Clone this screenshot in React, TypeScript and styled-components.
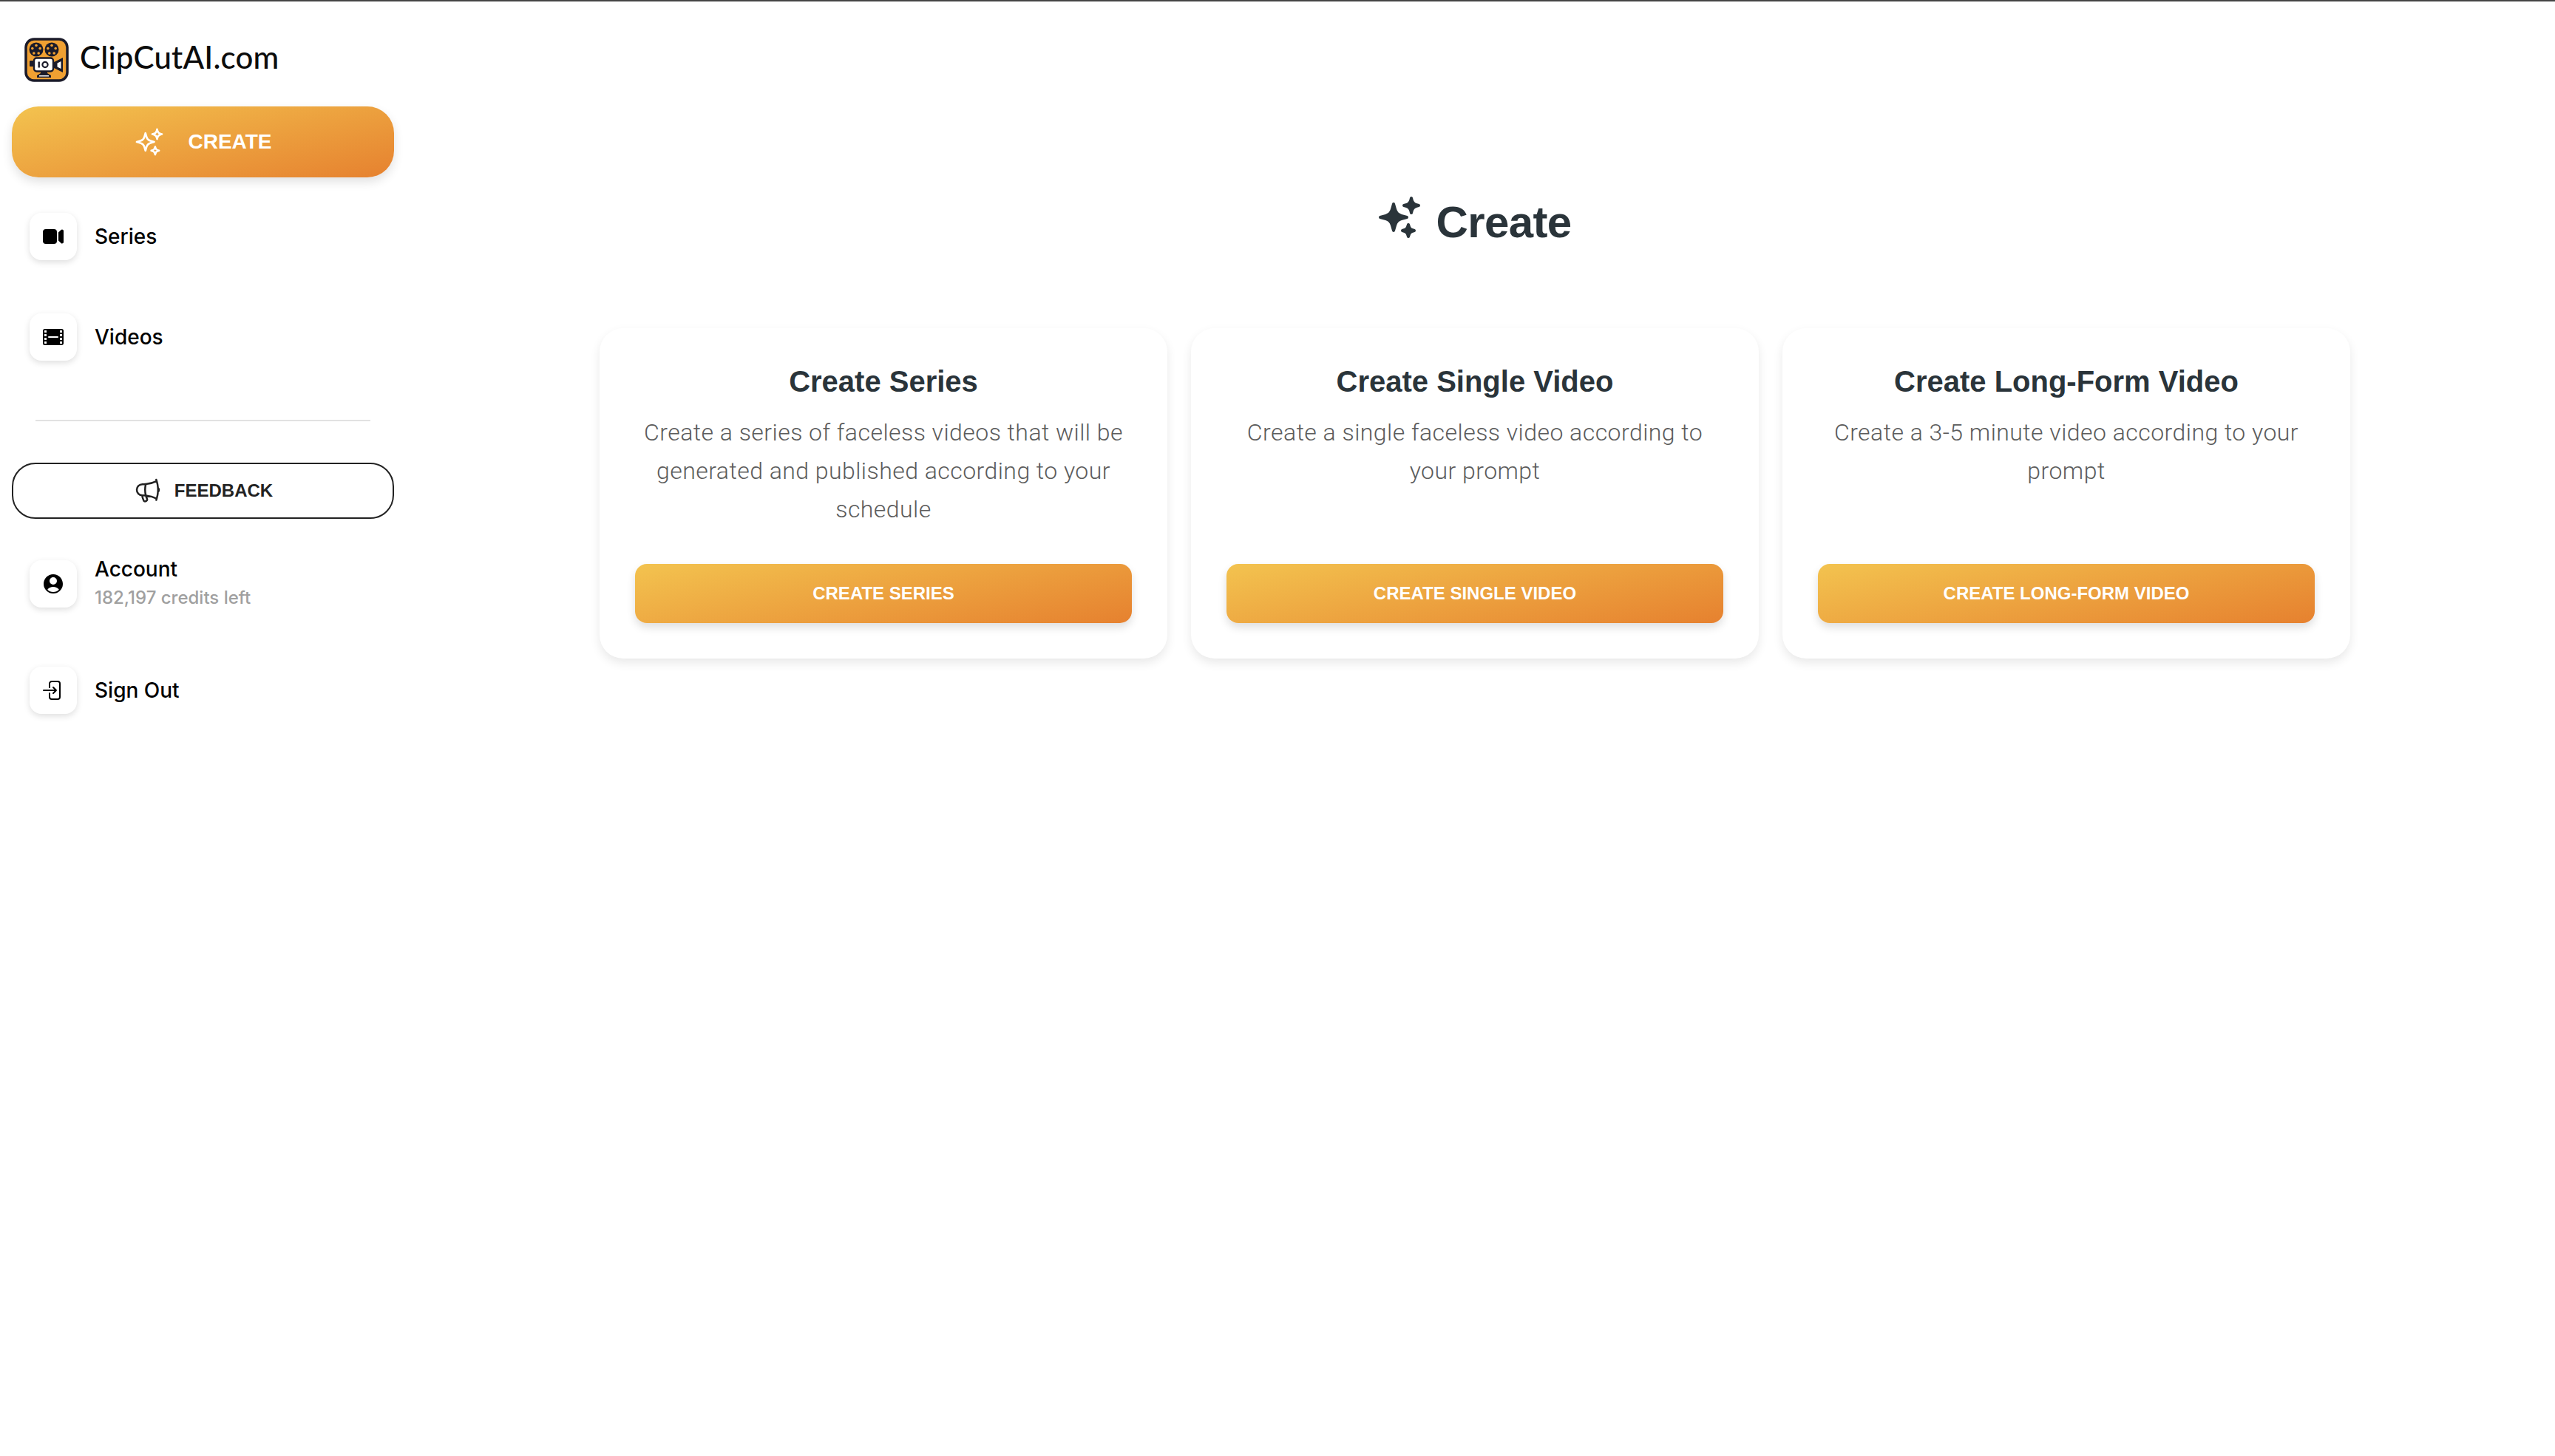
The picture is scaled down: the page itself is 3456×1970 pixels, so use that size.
import { ReactNode } from "react";
import styled, { createGlobalStyle } from "styled-components";
import {
  HiVideoCamera,
  HiFilm,
  HiSparkles,
  HiOutlineSparkles,
  HiOutlineMegaphone,
  HiUserCircle,
  HiOutlineArrowRightEndOnRectangle,
} from "react-icons/hi2";

const brandGradient = "linear-gradient(168deg, #f3c34f 0%, #e6812f 100%)";
const helvetica = '"Liberation Sans", Arial, sans-serif';

const GlobalStyle = createGlobalStyle`
  html, body {
    margin: 0;
    padding: 0;
    background: #fff;
  }
  * {
    box-sizing: border-box;
  }
`;

const Page = styled.div`
  display: flex;
  width: 3456px;
  height: 1970px;
  overflow: hidden;
  border-top: 2px solid #444;
  background: #fff;
`;

const Sidebar = styled.aside`
  width: 534px;
  flex-shrink: 0;
  display: flex;
  flex-direction: column;
  padding: 49px 1px 0 16px;
`;

const Brand = styled.div`
  display: flex;
  align-items: center;
  gap: 15px;
  height: 60px;
  padding-left: 17px;
`;

const BrandName = styled.span`
  padding-bottom: 8px;
  font-family: Lato, sans-serif;
  font-size: 42px;
  font-weight: 500;
  letter-spacing: 0.2px;
  color: #0c0c0c;
`;

const CreateButton = styled.button`
  display: flex;
  align-items: center;
  justify-content: center;
  gap: 31px;
  height: 96px;
  margin-top: 33px;
  border: 0;
  border-radius: 36px;
  background: ${brandGradient};
  box-shadow: 0 6px 14px rgba(0, 0, 0, 0.12);
  color: #fff;
  font-family: ${helvetica};
  font-size: 28px;
  font-weight: 700;
`;

const NavList = styled.nav<{ $gap: number; $top: number }>`
  display: flex;
  flex-direction: column;
  gap: ${(p) => p.$gap}px;
  margin-top: ${(p) => p.$top}px;
`;

const NavRow = styled.div`
  display: flex;
  align-items: center;
  gap: 24px;
  height: 64px;
  padding-left: 24px;
`;

const IconBox = styled.span`
  display: flex;
  align-items: center;
  justify-content: center;
  width: 64px;
  height: 64px;
  border-radius: 16px;
  background: #fff;
  box-shadow: 0 3px 8px rgba(0, 0, 0, 0.13);
  color: #000;
`;

const NavText = styled.div`
  display: flex;
  flex-direction: column;
  gap: 7px;
`;

const NavLabel = styled.span`
  font-family: Inter, sans-serif;
  font-size: 28px;
  line-height: 34px;
  font-weight: 500;
  color: #000;
`;

const NavHint = styled.span`
  margin-bottom: 4px;
  font-family: Inter, sans-serif;
  font-size: 24px;
  line-height: 30px;
  font-weight: 500;
  color: #a0a0a0;
`;

const Divider = styled.hr`
  width: 453px;
  height: 2px;
  margin: 80px 0 56px 32px;
  border: 0;
  background: #e2e2e2;
`;

const FeedbackButton = styled.button`
  display: flex;
  align-items: center;
  justify-content: center;
  gap: 16px;
  height: 76px;
  border: 2px solid #222;
  border-radius: 32px;
  background: #fff;
  color: #222;
  font-family: ${helvetica};
  font-size: 24px;
  font-weight: 700;
`;

const Main = styled.main`
  flex: 1;
  display: flex;
  flex-direction: column;
  align-items: center;
  padding-top: 258px;
`;

const Heading = styled.h1`
  display: flex;
  align-items: center;
  gap: 17px;
  height: 80px;
  margin: 0;
  color: #2a343a;
  font-family: ${helvetica};
  font-size: 60px;
  font-weight: 700;
  letter-spacing: -0.6px;
`;

const HeadingIcon = styled(HiSparkles)`
  width: 64px;
  height: 64px;
  margin-top: -12px;
  margin-left: -3px;
`;

const CardGrid = styled.section`
  display: grid;
  grid-template-columns: repeat(3, 768px);
  gap: 32px;
  margin-top: 104px;
`;

const Card = styled.article`
  display: flex;
  flex-direction: column;
  padding: 48px;
  border-radius: 32px;
  background: #fff;
  box-shadow: 0 6px 14px rgba(0, 0, 0, 0.09);
  text-align: center;
`;

const CardTitle = styled.h2`
  margin: 0 0 19px;
  color: #2a343a;
  font-family: ${helvetica};
  font-size: 40px;
  line-height: 48px;
  font-weight: 700;
`;

const CardText = styled.p`
  min-height: 156px;
  margin: 0 0 48px;
  color: #5c5c5c;
  font-family: Roboto, sans-serif;
  font-size: 32px;
  line-height: 52px;
  font-weight: 300;
  letter-spacing: 0.45px;
`;

const CardButton = styled.button`
  height: 80px;
  margin-top: auto;
  border: 0;
  border-radius: 16px;
  background: ${brandGradient};
  box-shadow: 0 6px 12px rgba(0, 0, 0, 0.13);
  color: #fff;
  font-family: ${helvetica};
  font-size: 24px;
  font-weight: 700;
`;

const cards = [
  {
    title: "Create Series",
    text: "Create a series of faceless videos that will be generated and published according to your schedule",
    action: "CREATE SERIES",
  },
  {
    title: "Create Single Video",
    text: "Create a single faceless video according to your prompt",
    action: "CREATE SINGLE VIDEO",
  },
  {
    title: "Create Long-Form Video",
    text: "Create a 3-5 minute video according to your prompt",
    action: "CREATE LONG-FORM VIDEO",
  },
];

const Logo = () => (
  <svg width="60" height="60" viewBox="0 0 60 60">
    <rect x="2" y="2" width="56" height="56" rx="11" fill="#f0a032" stroke="#1b1b2a" strokeWidth="3.5" />
    <g fill="#1b1b2a">
      <circle cx="16" cy="16" r="9.5" />
      <circle cx="37" cy="16" r="9.5" />
      <rect x="7" y="31" width="7" height="8" rx="1" />
      <path d="M40 33l12-6v20l-12-6z" />
      <path d="M22 44h9v4l5 3v3H17v-3l5-3z" />
    </g>
    <g fill="#f0a032">
      <circle cx="16" cy="10.5" r="1.8" />
      <circle cx="10.8" cy="14.5" r="1.8" />
      <circle cx="21.2" cy="14.5" r="1.8" />
      <circle cx="12.8" cy="21" r="1.8" />
      <circle cx="19.2" cy="21" r="1.8" />
      <circle cx="37" cy="10.5" r="1.8" />
      <circle cx="31.8" cy="14.5" r="1.8" />
      <circle cx="42.2" cy="14.5" r="1.8" />
      <circle cx="33.8" cy="21" r="1.8" />
      <circle cx="40.2" cy="21" r="1.8" />
    </g>
    <rect x="13" y="27.5" width="26" height="18" rx="3.5" fill="#fff" stroke="#1b1b2a" strokeWidth="2.4" />
    <rect x="18.5" y="32.5" width="2.4" height="8" fill="#1b1b2a" />
    <circle cx="28" cy="36.5" r="3.6" fill="none" stroke="#1b1b2a" strokeWidth="2.2" />
    <path d="M44.5 34.5l5-2.6v10.200l-5-2.600z" fill="#fff" />
    <path d="M20 51h13v1.500H20z" fill="#fff" />
  </svg>
);

const SideItem = ({ icon, label, hint }: { icon: ReactNode; label: string; hint?: string }) => (
  <NavRow>
    <IconBox>{icon}</IconBox>
    <NavText>
      <NavLabel>{label}</NavLabel>
      {hint && <NavHint>{hint}</NavHint>}
    </NavText>
  </NavRow>
);

const App = () => {
  return (
    <Page>
      <GlobalStyle />
      <Sidebar>
        <Brand>
          <Logo />
          <BrandName>ClipCutAI.com</BrandName>
        </Brand>
        <CreateButton>
          <HiOutlineSparkles size={42} />
          CREATE
        </CreateButton>
        <NavList $gap={72} $top={48}>
          <SideItem icon={<HiVideoCamera size={32} />} label="Series" />
          <SideItem icon={<HiFilm size={32} />} label="Videos" />
        </NavList>
        <Divider />
        <FeedbackButton>
          <HiOutlineMegaphone size={40} />
          FEEDBACK
        </FeedbackButton>
        <NavList $gap={80} $top={56}>
          <SideItem icon={<HiUserCircle size={32} />} label="Account" hint="182,197 credits left" />
          <SideItem icon={<HiOutlineArrowRightEndOnRectangle size={32} />} label="Sign Out" />
        </NavList>
      </Sidebar>
      <Main>
        <Heading>
          <HeadingIcon />
          Create
        </Heading>
        <CardGrid>
          {cards.map((card) => (
            <Card key={card.title}>
              <CardTitle>{card.title}</CardTitle>
              <CardText>{card.text}</CardText>
              <CardButton>{card.action}</CardButton>
            </Card>
          ))}
        </CardGrid>
      </Main>
    </Page>
  );
};

export default App;
